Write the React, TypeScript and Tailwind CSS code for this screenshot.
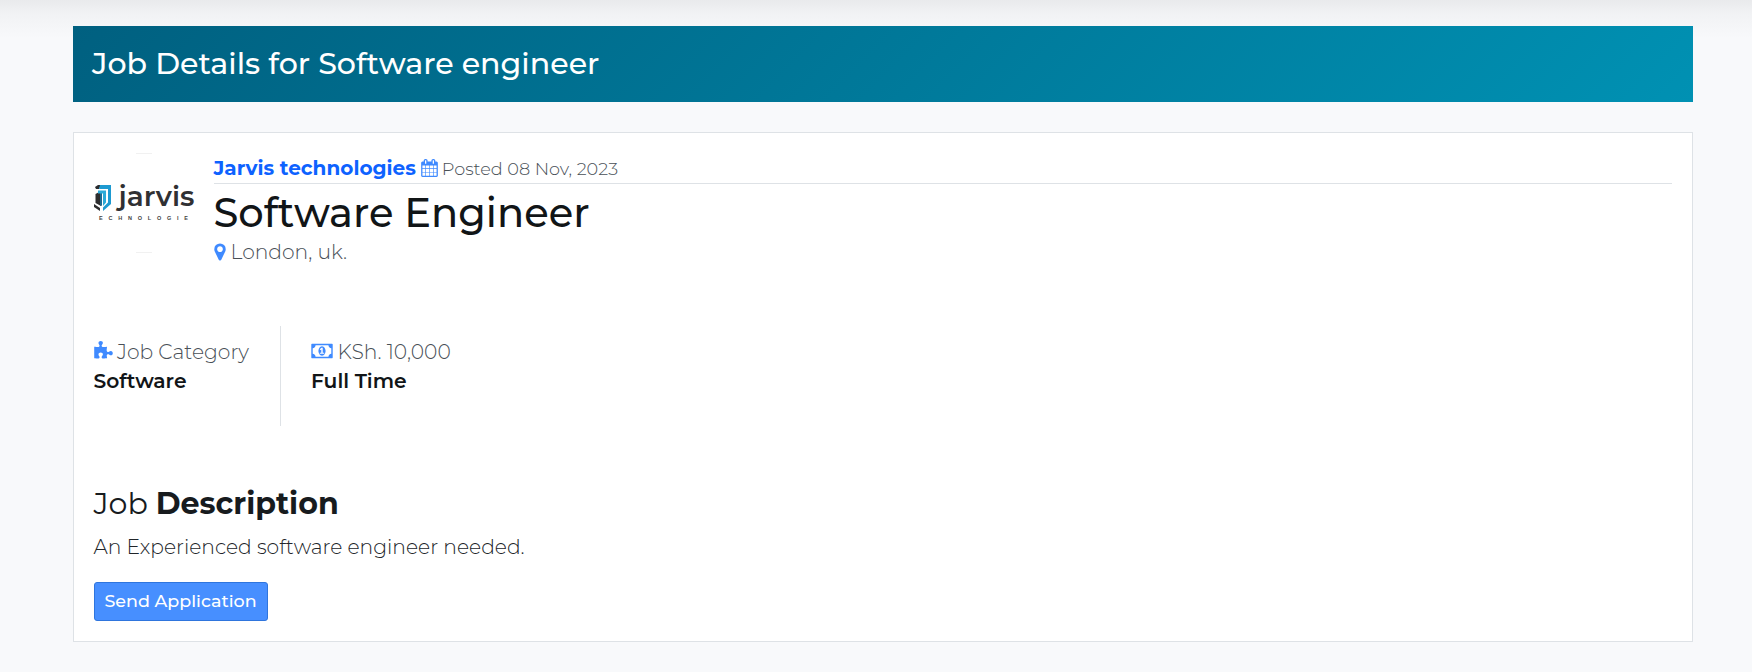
import type { ReactNode } from "react";

const paths = {
  calendar: {
    box: "64 0 1664 1792",
    d: "M192 1664h288v-288h-288v288zm352 0h320v-288h-320v288zm-352-352h288v-320h-288v320zm352 0h320v-320h-320v320zm-352-384h288v-288h-288v288zm736 736h320v-288h-320v288zm-384-736h320v-288h-320v288zm768 736h288v-288h-288v288zm-384-352h320v-320h-320v320zm-352-864v-288q0-13-9.5-22.5t-22.5-9.5h-64q-13 0-22.5 9.5t-9.5 22.5v288q0 13 9.5 22.5t22.5 9.5h64q13 0 22.5-9.5t9.5-22.5zm736 864h288v-320h-288v320zm-384-384h320v-288h-320v288zm384 0h288v-288h-288v288zm32-480v-288q0-13-9.5-22.5t-22.5-9.5h-64q-13 0-22.5 9.5t-9.5 22.5v288q0 13 9.5 22.5t22.5 9.5h64q13 0 22.5-9.5t9.5-22.5zm384-64v1280q0 52-38 90t-90 38h-1408q-52 0-90-38t-38-90v-1280q0-52 38-90t90-38h128v-96q0-66 47-113t113-47h64q66 0 113 47t47 113v96h384v-96q0-66 47-113t113-47h64q66 0 113 47t47 113v96h128q52 0 90 38t38 90z",
  },
  marker: {
    box: "384 0 1024 1792",
    d: "M1152 640q0-106-75-181t-181-75-181 75-75 181 75 181 181 75 181-75 75-181zm256 0q0 109-33 179l-364 774q-16 33-47.5 52t-67.5 19-67.5-19-46.5-52l-365-774q-33-70-33-179 0-212 150-362t362-150 362 150 150 362z",
  },
  puzzle: {
    box: "64 0 1664 1792",
    d: "M1728 1098q0 81-44.5 135t-123.5 54q-41 0-77.5-17.5t-59-38-56.5-38-71-17.5q-110 0-110 124 0 39 16 115t15 115v5q-22 0-33 1-34 3-97.5 11.5t-115.5 13.5-98 5q-61 0-103-26.5t-42-83.5q0-37 17.5-71t38-56.5 38-59 17.5-77.5q0-79-54-123.5t-135-44.5q-84 0-143 45.5t-59 127.5q0 43 15 83t33.5 64.5 33.5 53 15 50.5q0 45-46 89-37 35-117 35-95 0-245-24-9-2-27.5-4t-27.5-4l-13-2q-1 0-3-1-2 0-2-1v-1024q2 1 17.5 3.5t34 5 21.5 3.5q150 24 245 24 80 0 117-35 46-44 46-89 0-22-15-50.5t-33.5-53-33.5-64.5-15-83q0-82 59-127.5t144-45.5q80 0 134 44.5t54 123.5q0 41-17.5 77.5t-38 59-38 56.5-17.5 71q0 57 42 83.5t103 26.5q64 0 180-15t163-17v2q-1 2-3.5 17.5t-5 34-3.5 21.5q-24 150-24 245 0 80 35 117 44 46 89 46 22 0 50.5-15t53-33.5 64.5-33.5 83-15q82 0 127.5 59t45.5 143z",
  },
  money: {
    box: "0 0 1920 1792",
    d: "M768 1152h384v-96h-128v-448h-114l-148 137 77 80q42-37 55-57h2v288h-128v96zm512-256q0 70-21 142t-59.5 134-101.5 101-138 39-138-39-101.5-101-59.5-134-21-142 21-142 59.5-134 101.5-101 138-39 138 39 101.5 101 59.5 134 21 142zm512 256v-512q-106 0-181-75t-75-181h-1152q0 106-75 181t-181 75v512q106 0 181 75t75 181h1152q0-106 75-181t181-75zm128-832v1152q0 26-19 45t-45 19h-1792q-26 0-45-19t-19-45v-1152q0-26 19-45t45-19h1792q26 0 45 19t19 45z",
  },
};

function Icon({ name, className }: { name: keyof typeof paths; className: string }) {
  return (
    <svg viewBox={paths[name].box} fill="currentColor" className={`shrink-0 text-[#3f8aff] ${className}`}>
      <path d={paths[name].d} />
    </svg>
  );
}

function Logo() {
  return (
    <svg viewBox="0 0 100 100" className="size-[100px] shrink-0 overflow-visible">
      <path d="M42 .5h16M42 99.500h16" stroke="#f1f1f1" />
      <path d="M4 32h3l-2 4H2l-1-2zM1.500 41L7 38v15l-5.500-3zM0 51l6 4v3l-6-4z" fill="#2c2c2e" />
      <path d="M6 39h2v14l-2-1z" fill="#1c6a91" />
      <path d="M6 32h11v19l-8 7v-3.500l5-5V36H5z" fill="#1d9ad1" />
      <path d="M4 37.500h8v12l-3 3.500V40.500H4z" fill="#2baad8" />
      <text x="24.500" y="53" fontFamily="Montserrat, sans-serif" fontSize="27" fontWeight="600" fill="#303033" textLength="76" lengthAdjust="spacingAndGlyphs">jarvis</text>
      <text x="5" y="66.500" fontFamily="Liberation Sans, sans-serif" fontSize="5.500" fontWeight="700" fill="#444" textLength="89">ECHNOLOGIE</text>
    </svg>
  );
}

function Fact({ icon, label, value, className }: { icon: ReactNode; label: string; value: string; className: string }) {
  return (
    <div className={`h-[100px] pt-[10px] ${className}`}>
      <div className="flex h-[30px] items-center gap-[4.5px] font-light text-[#495057]">
        {icon}
        <span className="pt-[2px]">{label}</span>
      </div>
      <div className="h-[30px] leading-[30px] font-semibold text-[#111517]">{value}</div>
    </div>
  );
}

export default function App() {
  return (
    <div className="min-h-[672px] bg-[#f8f9fb] bg-[linear-gradient(180deg,#e9eaec_0px,#f1f2f4_13px,#f8f9fb_38px)] pt-[26px] pl-[73px] font-[Montserrat,sans-serif] text-[20.25px] text-[#212529]">
      <header className="flex h-[76px] w-[1620px] items-center bg-[linear-gradient(135deg,#006080_0%,#0091b3_100%)] px-[19px]">
        <h1 className="text-[30.1px] leading-[44px] font-medium text-white">Job Details for Software engineer</h1>
      </header>
      <main className="mt-[30px] h-[510px] w-[1620px] border border-[#dee2e6] bg-white pt-[20px] pr-[20px] pb-[20px] pl-[19.5px]">
        <section className="flex gap-[20px]">
          <Logo />
          <div className="flex-1">
            <div className="flex h-[31px] items-center gap-[5px] border-b border-[#dee2e6]">
              <a className="text-[20px] font-bold text-[#0d62ff]">Jarvis technologies</a>
              <Icon name="calendar" className="h-[18px] w-[17px]" />
              <span className="-ml-px pt-[2px] text-[17.7px] font-light text-[#495057]">Posted 08 Nov, 2023</span>
            </div>
            <h2 className="h-[56px] text-[40px] leading-[58px] font-medium text-[#111517]">Software Engineer</h2>
            <div className="flex h-[24px] items-center gap-[5px] font-light text-[#495057]">
              <Icon name="marker" className="-mt-px h-[20px] w-[12px]" />
              <span>London, uk.</span>
            </div>
          </div>
        </section>
        <section className="mt-[62px] flex">
          <Fact className="w-[186.5px]" icon={<Icon name="puzzle" className="h-[20px] w-[19px]" />} label="Job Category" value="Software" />
          <Fact className="border-l border-[#dee2e6] pl-[30px]" icon={<Icon name="money" className="h-[20px] w-[22px]" />} label="KSh. 10,000" value="Full Time" />
        </section>
        <section className="mt-[59px]">
          <h3 className="h-[38px] text-[30.1px] leading-[38px] text-[#171b1e]">
            Job <b className="font-bold">Description</b>
          </h3>
          <p className="mt-[9px] h-[30px] leading-[30px] font-light">An Experienced software engineer needed.</p>
          <button className="mt-[20px] h-[39px] w-[174px] rounded-[3px] border border-[#2f75dd] bg-[#478fff] text-[17.5px] font-medium text-white">Send Application</button>
        </section>
      </main>
    </div>
  );
}
